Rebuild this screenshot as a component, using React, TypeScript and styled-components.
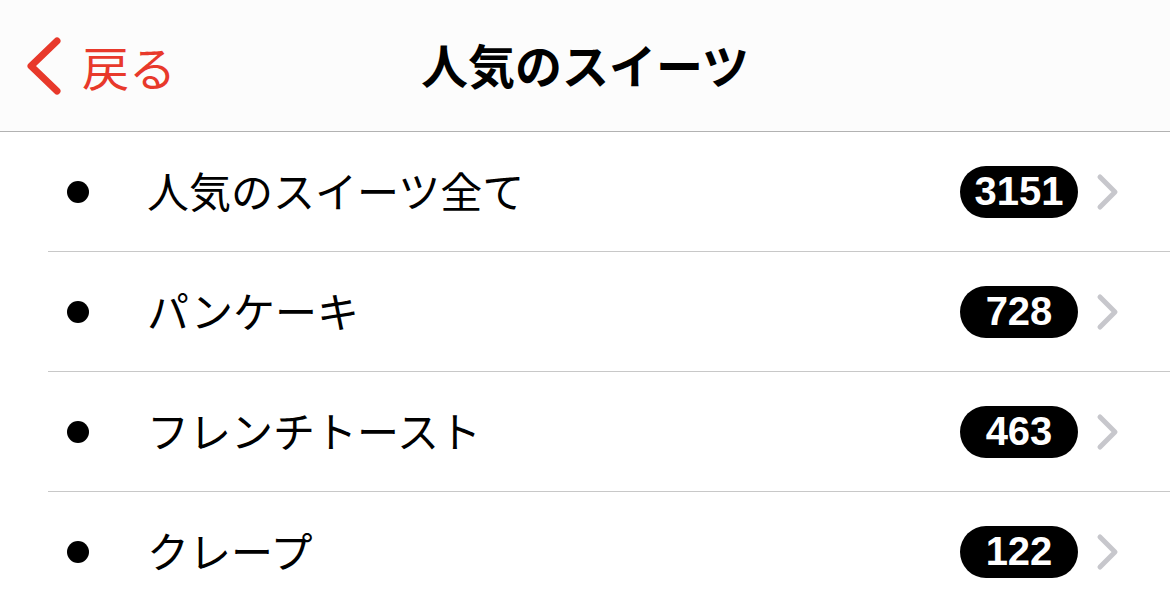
import React from "react";
import styled, { createGlobalStyle } from "styled-components";

interface ICategory {
	id: string;
	name: string;
	count: number;
}

const categories: ICategory[] = [
	{ id: "all", name: "人気のスイーツ全て", count: 3151 },
	{ id: "pancake", name: "パンケーキ", count: 728 },
	{ id: "french-toast", name: "フレンチトースト", count: 463 },
	{ id: "crepe", name: "クレープ", count: 122 },
];

const GlobalStyle = createGlobalStyle`
	html, body {
		margin: 0;
		padding: 0;
		background: #ffffff;
		font-family: "Noto Sans CJK JP", "Liberation Sans", sans-serif;
	}
`;

const Screen = styled.div`
	width: 1170px;
	height: 599px;
	overflow: hidden;
	background: #ffffff;
`;

const NavBar = styled.header`
	position: relative;
	display: flex;
	align-items: center;
	height: 132px;
	box-sizing: border-box;
	background: #fcfcfc;
	border-bottom: 1px solid #b2b2b2;
`;

const BackButton = styled.button`
	display: flex;
	align-items: center;
	gap: 20px;
	padding: 0 0 0 26px;
	border: none;
	background: none;
	color: #e8392b;
	font-family: "Noto Sans CJK JP", sans-serif;
	font-size: 47px;
	line-height: 1;
	cursor: pointer;
	z-index: 1;
`;

const Title = styled.h1`
	position: absolute;
	left: 0;
	right: 0;
	margin: 0 0 4px;
	text-align: center;
	font-size: 47px;
	font-weight: 700;
	color: #000000;
	line-height: 1;
`;

const List = styled.ul`
	list-style: none;
	margin: 0;
	padding: 0;
`;

const Row = styled.li`
	display: flex;
	align-items: center;
	height: 120px;
	box-sizing: border-box;
	margin-left: 48px;
	padding-right: 50px;
	border-bottom: 1px solid #c8c8c8;
`;

const Bullet = styled.span`
	width: 22px;
	height: 22px;
	border-radius: 50%;
	background: #000000;
	margin-left: 19px;
	margin-right: 58px;
	flex-shrink: 0;
`;

const Name = styled.span`
	flex: 1;
	font-size: 42px;
	color: #000000;
	line-height: 1;
	margin-bottom: 3px;
`;

const Badge = styled.span`
	min-width: 118px;
	height: 52px;
	box-sizing: border-box;
	padding: 0 14px;
	border-radius: 26px;
	background: #000000;
	color: #ffffff;
	font-family: "Liberation Sans", Arial, sans-serif;
	font-weight: 700;
	font-size: 40px;
	display: flex;
	align-items: center;
	justify-content: center;
	margin-right: 18px;
`;

const BackIcon = () => (
	<svg width="36" height="58" viewBox="0 0 36 58">
		<polyline
			points="31,4 5,29 31,54"
			fill="none"
			stroke="#e8392b"
			strokeWidth="7"
			strokeLinecap="round"
			strokeLinejoin="round"
		/>
	</svg>
);

const Chevron = () => (
	<svg width="24" height="38" viewBox="0 0 24 38">
		<polyline
			points="4,4 19,19 4,34"
			fill="none"
			stroke="#c7c7cc"
			strokeWidth="5"
			strokeLinecap="round"
			strokeLinejoin="round"
		/>
	</svg>
);

const App: React.FC = () => {
	return (
		<Screen>
			<GlobalStyle />
			<NavBar>
				<BackButton>
					<BackIcon />
					戻る
				</BackButton>
				<Title>人気のスイーツ</Title>
			</NavBar>
			<List>
				{categories.map(category => (
					<Row key={category.id}>
						<Bullet />
						<Name>{category.name}</Name>
						<Badge>{category.count}</Badge>
						<Chevron />
					</Row>
				))}
			</List>
		</Screen>
	);
};

export default App;
